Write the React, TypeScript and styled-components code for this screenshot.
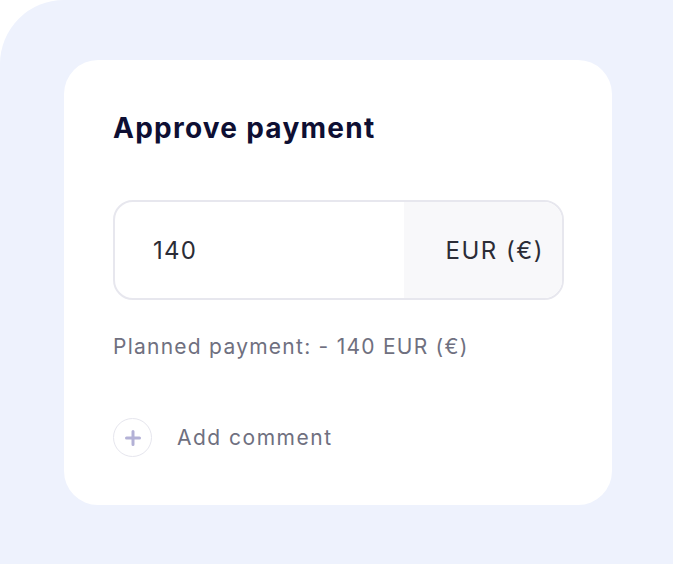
import React from "react";
import styled, { createGlobalStyle } from "styled-components";

const Global = createGlobalStyle`
  html, body { margin: 0; padding: 0; background: #ffffff; }
  body { font-family: Inter, "Noto Sans", sans-serif; }
  * { box-sizing: border-box; }
`;

const Panel = styled.div`
  width: 673px;
  height: 564px;
  background: #eef2fd;
  border-top-left-radius: 64px;
  padding: 60px 61px 0 64px;
  overflow: hidden;
`;

const Card = styled.div`
  width: 548px;
  height: 445px;
  background: #ffffff;
  border-radius: 34px;
  padding: 51px 48px 0 49px;
  display: flex;
  flex-direction: column;
`;

const Title = styled.h1`
  margin: 0;
  font-size: 28px;
  line-height: 34px;
  font-weight: 700;
  color: #0e0f33;
  letter-spacing: 1.25px;
`;

const Field = styled.div`
  margin-top: 55px;
  height: 100px;
  border: 2px solid #e7e7ee;
  border-radius: 20px;
  display: flex;
  overflow: hidden;
`;

const Amount = styled.div`
  flex: 1;
  display: flex;
  align-items: center;
  padding-left: 38px;
  font-size: 24px;
  letter-spacing: 1.2px;
  color: #2b2c36;
`;

const Currency = styled.div`
  width: 158px;
  background: #f8f8fa;
  display: flex;
  align-items: center;
  justify-content: flex-end;
  padding-right: 18px;
  font-size: 24px;
  letter-spacing: 1.5px;
  color: #2b2c36;
`;

const Hint = styled.p`
  margin: 35px 0 0;
  font-size: 21px;
  line-height: 24px;
  letter-spacing: 1.25px;
  color: #6f7080;
`;

const CommentRow = styled.div`
  margin-top: 59px;
  display: flex;
  align-items: center;
  gap: 25px;
`;

const PlusCircle = styled.div`
  width: 39px;
  height: 39px;
  border-radius: 50%;
  border: 1.5px solid #e6e6ee;
  display: flex;
  align-items: center;
  justify-content: center;
`;

const CommentLabel = styled.span`
  font-size: 21px;
  letter-spacing: 1.5px;
  color: #6f7080;
`;

export default function App() {
  return (
    <>
      <Global />
      <Panel>
        <Card>
          <Title>Approve payment</Title>
          <Field>
            <Amount>140</Amount>
            <Currency>EUR (€)</Currency>
          </Field>
          <Hint>Planned payment: - 140 EUR (€)</Hint>
          <CommentRow>
            <PlusCircle>
              <svg width="16" height="16" viewBox="0 0 16 16">
                <path d="M8 1.5v13M1.5 8h13" stroke="#b3b1d6" strokeWidth="3" strokeLinecap="round" />
              </svg>
            </PlusCircle>
            <CommentLabel>Add comment</CommentLabel>
          </CommentRow>
        </Card>
      </Panel>
    </>
  );
}
